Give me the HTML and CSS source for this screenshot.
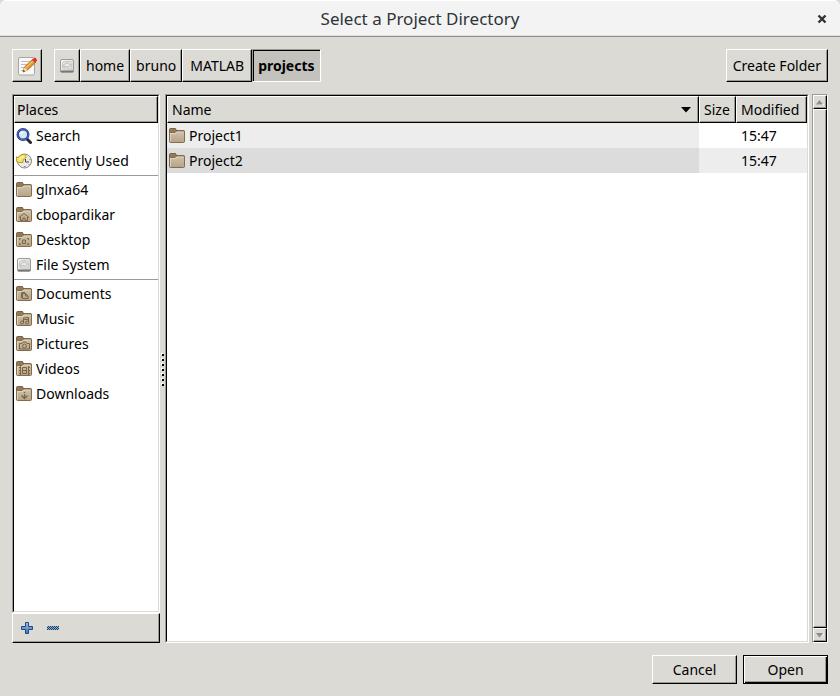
FILE: index.html
```html
<!DOCTYPE html>
<html lang="en">
<head>
<meta charset="utf-8">
<title>Select a Project Directory</title>
<link rel="stylesheet" href="styles.css">
</head>
<body>
<svg class="defs" width="0" height="0" aria-hidden="true">
  <defs>
    <linearGradient id="tan" x1="0" y1="0" x2="0" y2="1"><stop offset="0" stop-color="#d0c2ab"/><stop offset="1" stop-color="#b5a388"/></linearGradient>
    <linearGradient id="metal" x1="0" y1="0" x2="1" y2="1"><stop offset="0" stop-color="#fafafa"/><stop offset="1" stop-color="#cfcfcd"/></linearGradient>
    <linearGradient id="blue" x1="0" y1="0" x2="0" y2="1"><stop offset="0" stop-color="#9cc0e6"/><stop offset="1" stop-color="#3f74b5"/></linearGradient>
  </defs>
  <symbol id="folder" viewBox="0 0 16 16">
    <path d="M.5 13V1.500q0-1 1-1h4.500q1 0 1 1v1h7.500q1 0 1 1V13z" fill="#8f7a5c" stroke="#7a6240"/>
    <path d="M.5 5.500q0-1 1-1h4.500l1.500-1.500h7q1 0 1 1v9.500q0 1-1 1h-13q-1 0-1-1z" fill="url(#tan)" stroke="#866d4a"/>
    <path d="M1.500 13.500V5.500h5l1.500-1.500h6.500" fill="none" stroke="#e4dac9" stroke-opacity=".8"/>
  </symbol>
  <symbol id="disk" viewBox="0 0 16 16">
    <rect x="1.500" y="1.500" width="13" height="12.500" rx="1.500" fill="url(#metal)" stroke="#9a9a98"/>
    <path d="M1.500 12.500h13v1q0 1-1 1h-11q-1 0-1-1z" fill="#777775"/>
    <rect x="3.500" y="3.500" width="9" height="7.500" rx="2" fill="#e9e9e7" stroke="#c8c8c6"/>
    <path d="M5 9.500c-1-3 1-4.500 3-4.500s4 1.500 3 3-2.500 1.500-4 .500M5 9.500l2-1" fill="none" stroke="#b4b4b2"/>
  </symbol>
</svg>

<header class="titlebar">
  <h1>Select a Project Directory</h1>
  <button class="close" type="button" aria-label="Close">
    <svg width="10" height="10" viewBox="0 0 10 10"><path d="M1.500 1.500l7 7M8.500 1.500l-7 7" stroke="#2e3436" stroke-width="2.400"/></svg>
  </button>
</header>

<main class="dialog">
  <div class="toolbar">
    <button class="btn edit" type="button" aria-label="Type a file name">
      <svg width="20" height="20" viewBox="0 0 20 20">
        <rect x="1.500" y="1.500" width="16" height="17.500" rx="1.500" fill="#f8f8f7" stroke="#a5a5a2"/>
        <path d="M4 5.500h9M4 8.500h8M4 11.500h5M4 14.500h4" stroke="#bdbdba"/>
        <path d="M6 16l1.500-5 8.500-8 3 3-8.500 8z" fill="#e99a35" stroke="#a55e12" stroke-width=".8"/>
        <path d="M8.500 12L16 5" stroke="#ffd279"/>
        <path d="M6 16l1.500-4.500 3 2.800z" fill="#f3dfb8"/><path d="M6 16l.700-2 1.300 1.200z" fill="#222"/>
        <path d="M15 4l2-2q1.500-.800 2.500 1t0 2.200l-1.500 1.500z" fill="#dd3528"/>
      </svg>
    </button>
    <nav class="path" aria-label="Path">
      <button class="btn root" type="button" aria-label="File System root"><svg width="16" height="16"><use href="#disk"/></svg></button>
      <button class="btn" type="button">home</button>
      <button class="btn" type="button">bruno</button>
      <button class="btn wide" type="button">MATLAB</button>
      <button class="btn current" type="button" aria-current="page">projects</button>
    </nav>
    <button class="btn create" type="button">Create Folder</button>
  </div>

  <div class="panes">
    <section class="places">
      <div class="frame">
        <div class="frame-in">
          <h2 class="head">Places</h2>
          <ul>
            <li><a href="#search"><svg width="16" height="16" viewBox="0 0 16 16"><path d="M11 11l3.500 3.500" stroke="#26262e" stroke-width="3" stroke-linecap="round"/><circle cx="7" cy="6.500" r="5.300" fill="#dbe6f4" stroke="#1e3a8c" stroke-width="2.400"/><circle cx="7" cy="6.500" r="5.300" fill="none" stroke="#5a7dcc" stroke-width=".8"/><path d="M4.500 6q.500-2 2.500-2" fill="none" stroke="#fff" stroke-width="1.500"/></svg>Search</a></li>
            <li><a href="#recent"><svg width="16" height="16" viewBox="0 0 16 16"><circle cx="8.500" cy="8" r="7" fill="#e9e9e6" stroke="#888a85"/><path d="M9.500 6v3h3.500" fill="none" stroke="#444"/><path d="M8 13.500h1.500M12.500 12l.8-.8M13.500 6.500h1" stroke="#777"/><path d="M.5 8.500V3.500l1.500 1.500Q4 1 8.500 1.500q2 .5 1.500 2.500t-3 3v2.500h-4z" fill="#f3e06a" stroke="#b79a16" stroke-width=".9"/><path d="M3 7.500Q4 4 8 3.500" fill="none" stroke="#fdf7c4"/></svg>Recently Used</a></li>
            <li class="rule"><a href="#glnxa64"><svg width="16" height="16"><use href="#folder"/></svg>glnxa64</a></li>
            <li><a href="#home"><svg width="16" height="16" viewBox="0 0 16 16"><use href="#folder"/><path d="M3 10.500l5-4 5 4M4.500 10v3.500H7V11h2v2.500h2.500V10" fill="none" stroke="#7a6647"/></svg>cbopardikar</a></li>
            <li><a href="#desktop"><svg width="16" height="16" viewBox="0 0 16 16"><use href="#folder"/><path d="M5 6.500H3.500V8M3.500 11v1.500H5M11 6.500h1.500V8M12.500 11v1.500H11M6.500 8h3v3.500h-3z" fill="none" stroke="#7a6647"/></svg>Desktop</a></li>
            <li><a href="#filesystem"><svg width="16" height="16"><use href="#disk"/></svg>File System</a></li>
            <li class="rule"><a href="#documents"><svg width="16" height="16" viewBox="0 0 16 16"><use href="#folder"/><path d="M6.500 11.500h-1v-5h3.500M6.500 7.500h3l2.500 2.500v2.500H6.500zM9.500 7.500V10H12" fill="none" stroke="#7a6647"/></svg>Documents</a></li>
            <li><a href="#music"><svg width="16" height="16" viewBox="0 0 16 16"><use href="#folder"/><path d="M7.500 12V7l5-.500v5M7.500 8.500h5" fill="none" stroke="#7a6647"/><circle cx="6" cy="11.500" r="1.500" fill="none" stroke="#7a6647"/><circle cx="11" cy="11.500" r="1.500" fill="none" stroke="#7a6647"/></svg>Music</a></li>
            <li><a href="#pictures"><svg width="16" height="16" viewBox="0 0 16 16"><use href="#folder"/><path d="M3.500 7.500H6l1-1.500h3l1 1.500h2.500v5.500h-10z" fill="none" stroke="#7a6647"/><circle cx="8.500" cy="10" r="2" fill="none" stroke="#7a6647"/></svg>Pictures</a></li>
            <li><a href="#videos"><svg width="16" height="16" viewBox="0 0 16 16"><use href="#folder"/><path d="M4.500 5v9M12.500 5v9M6.500 6.500h4v6h-4zM6.500 9.500h4" fill="none" stroke="#7a6647"/><path d="M3 6.500h2M3 9.500h2M3 12.500h2M12 6.500h2M12 9.500h2M12 12.500h2" stroke="#7a6647"/></svg>Videos</a></li>
            <li><a href="#downloads"><svg width="16" height="16" viewBox="0 0 16 16"><use href="#folder"/><path d="M8.500 6v1M8.500 8v4M5.500 9.500l3 3 3-3" fill="none" stroke="#7a6647" stroke-width="1.300"/></svg>Downloads</a></li>
          </ul>
        </div>
      </div>
      <div class="actions">
        <button type="button" aria-label="Add bookmark"><svg width="14" height="14" viewBox="0 0 14 14"><path d="M5.500 1.500h3v4h4v3h-4v4h-3v-4h-4v-3h4z" fill="url(#blue)" stroke="#204a87"/></svg></button>
        <button type="button" aria-label="Remove bookmark" disabled><svg width="14" height="14" viewBox="0 0 14 14"><rect x="1" y="5" width="12" height="4" rx="1" fill="#8ba6c6"/><path d="M2 5.500h11M1 6.500h12M2 7.500h11M1 8.500h12" stroke="#24436c" stroke-dasharray="1 1"/></svg></button>
      </div>
    </section>

    <div class="grip" role="separator" aria-orientation="vertical"><i></i><i></i><i></i><i></i><i></i><i></i><i></i></div>

    <section class="frame files">
      <div class="frame-in">
        <table>
          <thead>
            <tr>
              <th class="name" scope="col" aria-sort="ascending"><div class="head">Name<svg width="10" height="6" viewBox="0 0 10 6"><path d="M0 0h10L5 5.500z"/></svg></div></th>
              <th class="size" scope="col"><div class="head">Size</div></th>
              <th class="modified" scope="col"><div class="head">Modified</div></th>
            </tr>
          </thead>
          <tbody>
            <tr><td><div class="file"><svg width="16" height="16"><use href="#folder"/></svg>Project1</div></td><td></td><td>15:47</td></tr>
            <tr><td><div class="file"><svg width="16" height="16"><use href="#folder"/></svg>Project2</div></td><td></td><td>15:47</td></tr>
          </tbody>
        </table>
      </div>
    </section>

    <div class="scroll">
      <button type="button" aria-label="Scroll up"><svg width="8" height="5" viewBox="0 0 8 5"><path d="M1 5h7V4z" fill="#fff"/><path d="M0 4.500h7L3.500 0z" fill="#8d8c85"/></svg></button>
      <div class="thumb"></div>
      <button type="button" aria-label="Scroll down"><svg width="8" height="5" viewBox="0 0 8 5"><path d="M8 0v1L4 5z" fill="#fff"/><path d="M0 0h7L3.500 4.500z" fill="#8d8c85"/></svg></button>
    </div>
  </div>

  <footer class="buttons">
    <button class="btn" type="button">Cancel</button>
    <button class="btn default" type="button">Open</button>
  </footer>
</main>
</body>
</html>
```
FILE: styles.css
```css
:root {
  --bg: #dcdad5;
  --shade: #9c9b93;
}
* { box-sizing: border-box; }
body {
  margin: 0;
  height: 100vh;
  display: flex;
  flex-direction: column;
  background: var(--bg);
  color: #000;
  font: 14px/20px "Noto Sans", "Open Sans", sans-serif;
}
button { font: inherit; color: inherit; padding: 0; }
svg { display: block; flex: none; }
.defs { position: absolute; }

.titlebar {
  display: grid;
  grid-template-columns: 36px 1fr 36px;
  align-items: center;
  height: 37px;
  flex: none;
  background: #f3f3f3;
  border-top: 1px solid #fff;
  border-bottom: 1px solid #8f908a;
  box-shadow: inset 0 -1px #dededc;
  border-radius: 6px 6px 0 0;
}
.titlebar h1 {
  grid-column: 2;
  margin: 0;
  text-align: center;
  font: 17px/24px "Noto Sans", sans-serif;
  color: #2e3436;
}
.close {
  display: grid;
  place-items: center;
  height: 24px;
  background: none;
  border: 0;
}

.dialog {
  flex: 1;
  min-height: 0;
  display: flex;
  flex-direction: column;
  gap: 12px;
  padding: 12px;
}
.btn {
  display: flex;
  align-items: center;
  justify-content: center;
  background: var(--bg);
  border: 1px solid;
  border-color: #fff #000 #000 #fff;
  box-shadow: inset -1px -1px var(--shade);
}
.toolbar { display: flex; height: 33px; flex: none; }
.edit { width: 30px; margin-right: 12px; }
.path { display: flex; }
.path .btn { padding: 0 5px; }
.path .root { padding: 0 4px; }
.path .wide { padding: 0 7px; }
.path .current {
  background: #c4c2bc;
  border-color: var(--shade) #fff #fff var(--shade);
  box-shadow: inset 1px 1px #000;
  font-weight: 700;
}
.create { margin-left: auto; padding: 0 6px; }

.panes { flex: 1; min-height: 0; display: flex; }
.places { width: 148px; display: flex; flex-direction: column; }
.frame {
  flex: 1;
  min-width: 0;
  display: flex;
  border: 1px solid;
  border-color: var(--shade) #fff #fff var(--shade);
}
.frame-in {
  flex: 1;
  min-width: 0;
  background: #fff;
  border: 1px solid;
  border-color: #000 var(--bg) var(--bg) #000;
}
.head {
  display: flex;
  align-items: center;
  justify-content: space-between;
  margin: 0;
  height: 27px;
  padding: 0 4px;
  background: var(--bg);
  border: 1px solid;
  border-color: #fff #000 #000 #fff;
  box-shadow: inset -1px -1px var(--shade);
  font-size: 14px;
  font-weight: 400;
}
.places .head { padding-left: 2px; }
.places ul { margin: 0; padding: 0; list-style: none; }
.places a {
  display: flex;
  align-items: center;
  gap: 4px;
  height: 25px;
  padding-left: 2px;
  color: inherit;
  text-decoration: none;
}
.rule { margin-top: 2px; padding-top: 1px; border-top: 1px solid var(--shade); }
.actions {
  display: flex;
  align-items: center;
  gap: 12px;
  height: 30px;
  padding-left: 7px;
  border: 1px solid;
  border-color: #fff #000 #000 #fff;
  box-shadow: inset -1px -1px var(--shade);
}
.actions button { background: none; border: 0; }

.grip {
  width: 5px;
  display: flex;
  flex-direction: column;
  align-items: center;
  justify-content: center;
  gap: 3px;
  padding-top: 2px;
}
.grip i { width: 2px; height: 2px; background: #000; box-shadow: -1px -1px #fff; }

table { width: 100%; border-collapse: collapse; table-layout: fixed; }
th, td { padding: 0; text-align: left; font-weight: 400; }
.size { width: 37px; }
.modified { width: 71px; }
.name .head { padding-right: 7px; }
td { height: 25px; }
td:last-child { padding-left: 5px; }
tbody td:first-child { background: #ededed; }
tbody tr:nth-child(even) td { background: #ededed; }
tbody tr:nth-child(even) td:first-child { background: #dcdcdc; }
.file { display: flex; align-items: center; gap: 4px; padding-left: 2px; }

.scroll {
  width: 16px;
  margin-left: 3px;
  display: flex;
  flex-direction: column;
  background: #c4c2bc;
  border: 1px solid;
  border-color: var(--shade) #fff #fff var(--shade);
}
.scroll button, .thumb {
  background: var(--bg);
  border: 1px solid;
  border-color: #fff #000 #000 #fff;
  box-shadow: inset -1px -1px var(--shade);
}
.scroll button { display: grid; place-items: center; height: 14px; }
.thumb { flex: 1; }

.buttons { display: flex; justify-content: flex-end; gap: 6px; flex: none; }
.buttons .btn { width: 85px; height: 29px; }
.buttons .default {
  border: 1px solid #000;
  box-shadow: inset 1px 1px #fff, inset -1px -1px #000, inset -2px -2px var(--shade);
}
```
